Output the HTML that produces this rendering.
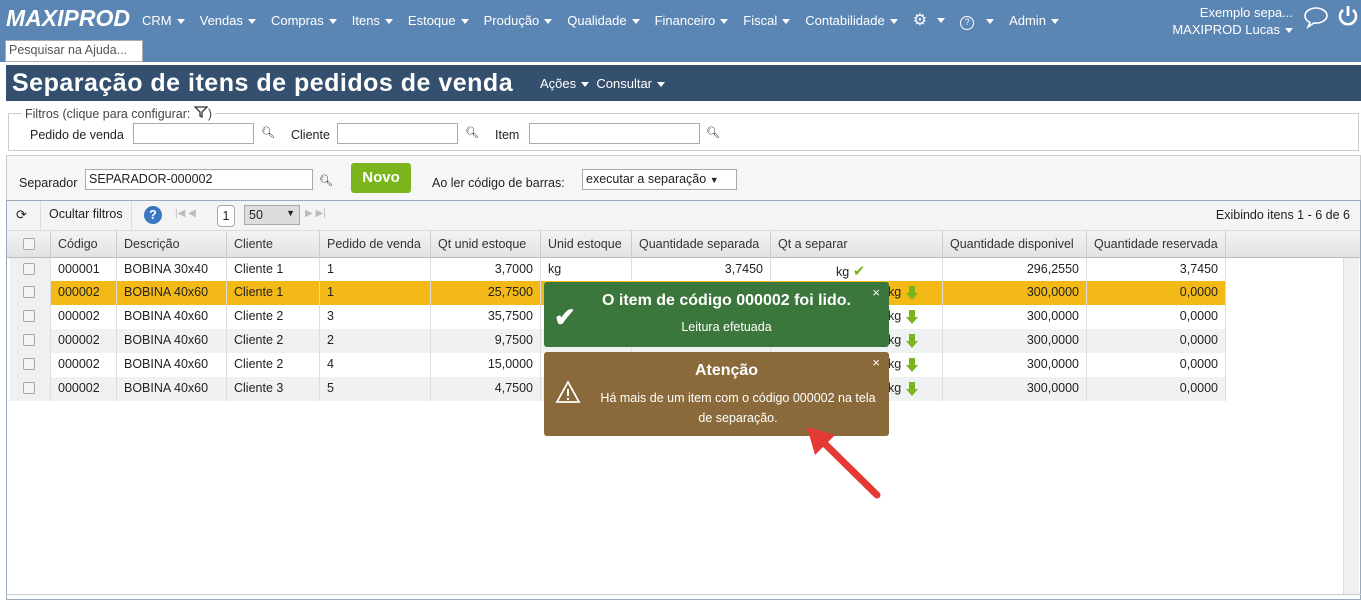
<!DOCTYPE html>
<html><head><meta charset="utf-8"><style>
*{box-sizing:border-box;margin:0;padding:0}
body{width:1361px;height:606px;overflow:hidden;background:#fff;font-family:"Liberation Sans",sans-serif;font-size:12.5px;color:#222;position:relative}
.a{position:absolute}
.top{left:0;top:0;width:1361px;height:62px;background:#5b86b3}
.menu{top:10px;color:#fff;font-size:13px;white-space:nowrap}
.menu span{margin-right:15px}
.tri{display:inline-block;width:0;height:0;border-left:4px solid transparent;border-right:4px solid transparent;border-top:5px solid #fff;vertical-align:middle;margin-left:5px}
.tb{left:6px;top:65px;width:1355px;height:36px;background:#34506e}
.box{border:1px solid #bbb}
.inp{position:absolute;height:21px;border:1px solid #aaa;background:#fff;font-size:12.5px;padding:2px 3px}
.cell{position:absolute;height:100%;border-right:1px solid #ddd;padding:4px 7px;white-space:nowrap;overflow:hidden}
.r{text-align:right}
.cb{display:inline-block;width:12px;height:12px;border:1px solid #aaa;border-radius:2px;background:#f4f4f4;margin-top:1px}
.arr{display:inline-block;width:14px;height:16px;vertical-align:middle}
</style></head><body>
<div class="a top"></div>
<div class="a" style="left:6px;top:5px;color:#fff;font-weight:bold;font-style:italic;font-size:23px">MAXIPROD</div>
<div class="a menu" style="left:142px"><span>CRM<i class="tri"></i></span><span>Vendas<i class="tri"></i></span><span>Compras<i class="tri"></i></span><span>Itens<i class="tri"></i></span><span>Estoque<i class="tri"></i></span><span>Produção<i class="tri"></i></span><span>Qualidade<i class="tri"></i></span><span>Financeiro<i class="tri"></i></span><span>Fiscal<i class="tri"></i></span><span>Contabilidade<i class="tri"></i></span><span style="font-size:16px">⚙<i class="tri" style="margin-left:10px"></i></span><span><span style="display:inline-block;width:14px;height:14px;border:1.5px solid #fff;border-radius:50%;font-size:9px;text-align:center;line-height:11px;margin:0">?</span><i class="tri" style="margin-left:12px"></i></span><span>Admin<i class="tri"></i></span></div>
<div class="a" style="right:68px;top:4px;color:#fff;font-size:13px;text-align:right;line-height:17px">Exemplo sepa...<br>MAXIPROD Lucas<i class="tri"></i></div>
<svg class="a" style="left:1302px;top:5px" width="28" height="24" viewBox="0 0 28 24"><path d="M14 3C8 3 3 6.5 3 11c0 3 2 5 5 6.5L6 22l6-4c1 .1 1.5.1 2 .1 6 0 11-3.5 11-7.5S20 3 14 3z" fill="none" stroke="#fff" stroke-width="1.6"/></svg>
<svg class="a" style="left:1336px;top:4px" width="24" height="24" viewBox="0 0 24 24"><path d="M7 6a8 8 0 1 0 10 0" fill="none" stroke="#fff" stroke-width="2.6"/><path d="M12 2v10" stroke="#fff" stroke-width="2.8"/></svg>
<div class="inp" style="left:5px;top:40px;width:138px;height:22px;color:#555;font-size:12.5px">Pesquisar na Ajuda...</div>
<div class="a tb"></div>
<div class="a" style="left:12px;top:69px;color:#fff;font-weight:bold;font-size:25px;letter-spacing:0.5px">Separação de itens de pedidos de venda</div>
<div class="a" style="left:540px;top:76px;color:#fff;font-size:13px">Ações<i class="tri"></i>&nbsp;&nbsp;Consultar<i class="tri"></i></div>
<div class="a box" style="left:8px;top:113px;width:1351px;height:38px;border-color:#ccc"></div>
<div class="a" style="left:22px;top:106px;background:#fff;padding:0 3px;color:#444;font-size:12.5px">Filtros (clique para configurar: <svg width="14" height="12" viewBox="0 0 14 12"><path d="M1 1h12L8 6v5L6 10V6z" fill="none" stroke="#333" stroke-width="1.3"/></svg>)</div>
<div class="a" style="left:30px;top:128px">Pedido de venda</div><div class="inp" style="left:133px;top:123px;width:121px"></div><div class="a" style="left:261px;top:126px;font-size:11px">🔍︎</div>
<div class="a" style="left:291px;top:128px">Cliente</div><div class="inp" style="left:337px;top:123px;width:121px"></div><div class="a" style="left:465px;top:126px;font-size:11px">🔍︎</div>
<div class="a" style="left:495px;top:128px">Item</div><div class="inp" style="left:529px;top:123px;width:171px"></div><div class="a" style="left:706px;top:126px;font-size:11px">🔍︎</div>
<div class="a box" style="left:6px;top:155px;width:1355px;height:46px;background:#f6f6f6;border-color:#ccc"></div>
<div class="a" style="left:19px;top:176px">Separador</div><div class="inp" style="left:85px;top:169px;width:228px">SEPARADOR-000002</div><div class="a" style="left:319px;top:174px;font-size:11px">🔍︎</div>
<div class="a" style="left:351px;top:163px;width:60px;height:30px;background:#7ab51d;border-radius:3px;color:#fff;font-weight:bold;font-size:15px;text-align:center;line-height:30px">Novo</div>
<div class="a" style="left:432px;top:176px">Ao ler código de barras:</div><div class="inp" style="left:582px;top:169px;width:155px">executar a separação <span style="font-size:9px">▼</span></div>
<div class="a" style="left:6px;top:200px;width:1355px;height:400px;border:1px solid #9ab;"></div>
<div class="a" style="left:7px;top:201px;width:1353px;height:30px;background:#f4f4f4;border-bottom:1px solid #ddd"></div>
<div class="a" style="left:16px;top:207px;font-size:13px">⟳</div>
<div class="a" style="left:40px;top:201px;height:30px;border-left:1px solid #ddd;border-right:1px solid #ddd;padding:6px 8px">Ocultar filtros</div>
<div class="a" style="left:144px;top:206px;width:18px;height:18px;border-radius:50%;background:#3a78c4;color:#fff;text-align:center;font-weight:bold;line-height:18px">?</div>
<div class="a" style="left:175px;top:208px;color:#bbb;font-size:10px">|◀ ◀</div>
<div class="a" style="left:217px;top:205px;width:18px;height:22px;border:1px solid #aaa;border-radius:4px;background:#fff;text-align:center;line-height:20px">1</div>
<div class="a" style="left:244px;top:205px;width:56px;height:20px;border:1px solid #aaa;background:#ddd;padding:2px 4px">50 <span style="float:right;font-size:9px">▼</span></div>
<div class="a" style="left:305px;top:208px;color:#bbb;font-size:10px">▶ ▶|</div>
<div class="a" style="right:11px;top:208px">Exibindo itens 1 - 6 de 6</div>
<div class="a" style="left:7px;top:231px;width:1353px;height:27px;background:linear-gradient(#f3f3f3,#e2e2e2);border-bottom:1px solid #bbb"></div>
<div class="a" style="left:1343px;top:258px;width:16px;height:336px;background:#f0f0f0;border-left:1px solid #ddd"></div>
<div id="g"></div>
<div class="a" style="left:6px;top:594px;width:1355px;height:12px;border-top:1px solid #ccc"></div>
<div class="a" style="left:544px;top:282px;width:345px;height:65px;background:#3b763c;border-radius:3px;color:#fff;text-align:center">
<div style="margin-top:10px;font-weight:bold;font-size:16px;padding-left:20px">O item de código 000002 foi lido.</div>
<div style="margin-top:10px;font-size:12.5px;padding-left:20px">Leitura efetuada</div>
<div class="a" style="left:10px;top:20px;font-size:26px;font-weight:bold">✔</div>
<div class="a" style="right:9px;top:3px;font-size:13px">×</div></div>
<div class="a" style="left:544px;top:352px;width:345px;height:84px;background:#8a6a3a;border-radius:3px;color:#fff;text-align:center">
<div style="margin-top:10px;font-weight:bold;font-size:16px;padding-left:20px">Atenção</div>
<div style="margin-top:8px;font-size:12.5px;padding-left:55px;padding-right:12px;line-height:20px">Há mais de um item com o código 000002 na tela de separação.</div>
<svg class="a" style="left:11px;top:28px" width="26" height="24" viewBox="0 0 26 24"><path d="M13 2L24 22H2z" fill="none" stroke="#fff" stroke-width="1.8"/><path d="M13 9v7M13 18v2" stroke="#fff" stroke-width="2"/></svg>
<div class="a" style="right:9px;top:3px;font-size:13px">×</div></div>
<svg class="a" style="left:795px;top:415px" width="95" height="90" viewBox="0 0 95 90"><path d="M82 80L25 24" stroke="#e53935" stroke-width="7" stroke-linecap="round"/><path d="M12 12L40 20L20 40z" fill="#e53935"/></svg>
<script>
var cols=[[10,41],[51,66],[117,110],[227,93],[320,111],[431,110],[541,91],[632,139],[771,172],[943,144],[1087,139]];
var hd=["","Código","Descrição","Cliente","Pedido de venda","Qt unid estoque","Unid estoque","Quantidade separada","Qt a separar","Quantidade disponivel","Quantidade reservada"];
var data=[["000001","BOBINA 30x40","Cliente 1","1","3,7000","kg","3,7450","ok","296,2550","3,7450"],
["000002","BOBINA 40x60","Cliente 1","1","25,7500","kg","","dn","300,0000","0,0000"],
["000002","BOBINA 40x60","Cliente 2","3","35,7500","kg","","dn","300,0000","0,0000"],
["000002","BOBINA 40x60","Cliente 2","2","9,7500","kg","","dn","300,0000","0,0000"],
["000002","BOBINA 40x60","Cliente 2","4","15,0000","kg","","dn","300,0000","0,0000"],
["000002","BOBINA 40x60","Cliente 3","5","4,7500","kg","","dn","300,0000","0,0000"]];
var rt=[5,7,9,10];var h="";
h+='<div class="a" style="left:0;top:231px;height:27px;width:1343px">';
for(var i=0;i<cols.length;i++){h+='<div class="cell" style="left:'+cols[i][0]+'px;width:'+cols[i][1]+'px;border-right-color:#ccc;padding-top:6px;color:#333">'+(i==0?'<span class="cb" style="margin-left:6px"></span>':hd[i])+'</div>';}
h+='</div>';
var tops=[258,281,305,329,353,377];
for(var r=0;r<6;r++){var bg=r==1?'#f3b916':(r%2==0?'#fff':'#f0f1f3');
h+='<div class="a" style="top:'+tops[r]+'px;left:10px;width:1216px;height:24px;background:'+bg+'">';
for(var i=0;i<cols.length;i++){var v=i==0?'<span class="cb" style="margin-left:6px"></span>':data[r][i-1];
if(i==8){v=data[r][7]=='ok'?'<span style="margin-left:58px">kg <span style="color:#7ab51d;font-size:15px">✔</span></span>':'<span style="margin-left:110px">kg <svg class="arr" viewBox="0 0 14 16"><path d="M4 1h6v7h3L7 15 1 8h3z" fill="#7ab51d"/></svg></span>';}
var st='left:'+(cols[i][0]-10)+'px;width:'+cols[i][1]+'px;'+(i==0?'background:#eef0f2;':'');
h+='<div class="cell'+(rt.indexOf(i)>=0||i==7?' r':'')+'" style="'+st+'">'+v+'</div>';}
h+='</div>';}
document.getElementById('g').innerHTML=h;
</script>
</body></html>
